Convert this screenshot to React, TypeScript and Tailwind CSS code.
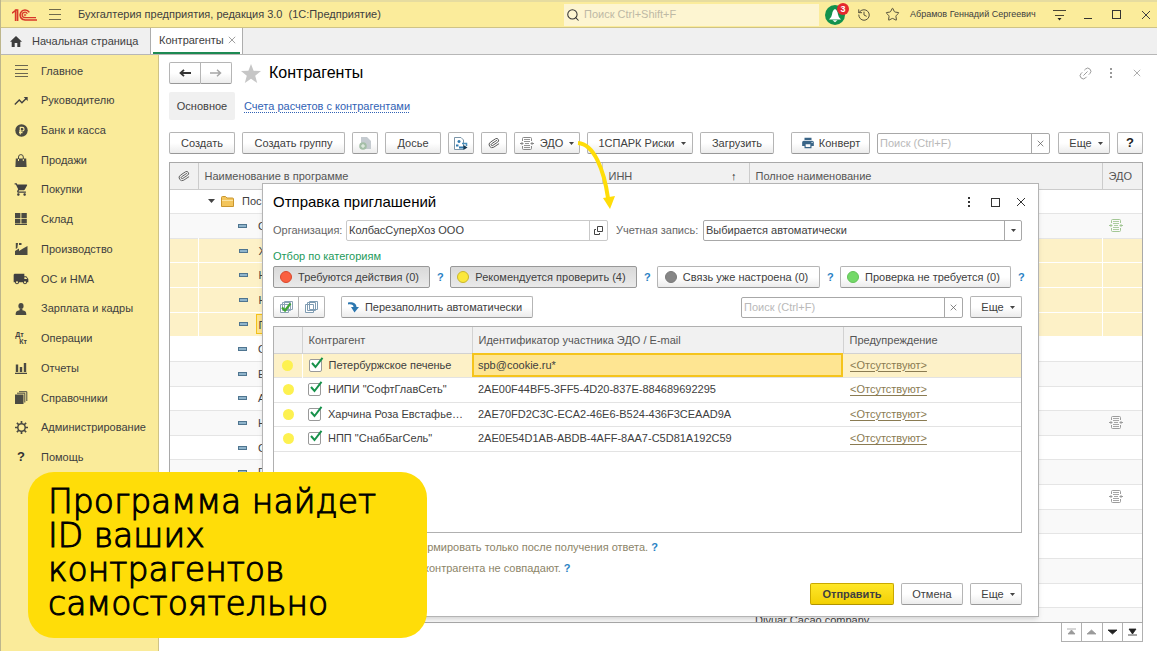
import React from "react";
import clsx from "clsx";
import { MdTrendingUp, MdShoppingCart, MdLocalShipping, MdPrint } from "react-icons/md";
import { History, Link2, Paperclip, Search, Star } from "lucide-react";

const ink = "#4a4a42";

type IconProps = { className?: string };

function Logo() {
  return (
    <svg width="25" height="12" viewBox="0 0 25 12" fill="none" stroke="#d8382a" strokeWidth="1.6">
      <path d="M0 4.2L3.6 1.4V12M2.8 1H5.6V12" />
      <path d="M17.3 3.4A5 5 0 1 0 13 11H25" />
      <path d="M15.3 4.8A2.7 2.7 0 1 0 13 8.6H24" strokeWidth="1.3" />
      <circle cx="13" cy="6" r=".9" strokeWidth=".8" />
    </svg>
  );
}

function EdoIcon({ className }: IconProps) {
  return (
    <svg className={className} width="14" height="13" viewBox="0 0 14 13" fill="none" stroke="currentColor">
      <path d="M2.5 4V1.5Q2.5 .5 3.5 .5H10.5Q11.5 .5 11.5 1.5V4M2.5 9V11.5Q2.5 12.5 3.5 12.5H10.5Q11.5 12.5 11.5 11.5V9" />
      <path d="M4 2.5H10M4 4.5H10M5 6.5H9M4 8.5H10M4 10.5H10" strokeWidth=".9" />
      <path d="M0 6.5H3M11 6.5H14" />
      <path d="M1.5 4.8L3.8 6.5L1.5 8.2zM12.5 4.8L10.2 6.5L12.5 8.2z" fill="currentColor" stroke="none" />
    </svg>
  );
}

function Dots({ className }: IconProps) {
  return (
    <svg className={className} width="4" height="12" viewBox="0 0 4 12" fill="currentColor">
      <rect x="1" y="1" width="2" height="2" />
      <rect x="1" y="5" width="2" height="2" />
      <rect x="1" y="9" width="2" height="2" />
    </svg>
  );
}

function Cross({ className }: IconProps) {
  return (
    <svg className={className} viewBox="0 0 10 10" fill="none" stroke="currentColor">
      <path d="M1 1L9 9M9 1L1 9" />
    </svg>
  );
}

function Caret() {
  return (
    <svg width="5" height="3" viewBox="0 0 5 3" fill="#444">
      <path d="M0 0H5L2.5 3z" />
    </svg>
  );
}

function Square() {
  return <span className="block size-[9px] border border-[#333]" />;
}

function MenuGlyph({ id }: { id: string }) {
  switch (id) {
    case "main":
      return (
        <svg width="13" height="12" viewBox="0 0 13 12" stroke="#6b6650">
          <path d="M0 .5H13M0 4.5H13M0 8.5H13M0 11.5H13" />
        </svg>
      );
    case "chief":
      return <MdTrendingUp size={16} />;
    case "bank":
      return (
        <svg width="13" height="13" viewBox="0 0 13 13">
          <circle cx="6.5" cy="6.5" r="6.2" fill={ink} />
          <path d="M5.3 10.5V3.3H7.2A1.8 1.8 0 0 1 7.2 7H4M4 8.7H7.5" fill="none" stroke="#faeb9a" strokeWidth="1.2" />
        </svg>
      );
    case "sales":
      return (
        <svg width="12" height="13" viewBox="0 0 12 13" fill={ink}>
          <path d="M.8 4.5H11.2L11.6 13H.4z" />
          <path d="M3.5 7V3A2.4 2.4 0 0 1 8.3 3V7" fill="none" stroke={ink} />
          <path d="M3.5 5V7M8.3 5V7" stroke="#faeb9a" />
        </svg>
      );
    case "purchases":
      return <MdShoppingCart size={15} />;
    case "stock":
      return (
        <svg width="12" height="12" viewBox="0 0 12 12" fill={ink}>
          <path d="M0 0H5.4V5H0zM6.4 0H11.8V5H6.4zM0 5.8H5.4V10.5H0zM6.4 5.8H11.8V10.5H6.4zM0 11H12V12H0z" />
        </svg>
      );
    case "production":
      return (
        <svg width="13" height="12" viewBox="0 0 13 12" fill={ink}>
          <path d="M0 8L4 5.5V8L8 5.5L12.5 3V12H0zM.8 0H3L2.4 5L.8 6zM4 0H6.5V2H4z" />
        </svg>
      );
    case "assets":
      return <MdLocalShipping size={16} />;
    case "salary":
      return (
        <svg width="12" height="12" viewBox="0 0 12 12" fill={ink}>
          <ellipse cx="6" cy="3" rx="2.6" ry="3" />
          <path d="M.7 12C.6 8.6 1.5 8 4.6 7.3V6H7.4V7.3C10.5 8 11.4 8.6 11.3 12z" />
        </svg>
      );
    case "operations":
      return (
        <span className="flex flex-col text-[7px] leading-[7px] font-bold">
          <span>Дт</span>
          <span className="pl-1">Кт</span>
        </span>
      );
    case "reports":
      return (
        <svg width="12" height="11" viewBox="0 0 12 11" fill={ink}>
          <path d="M.8 1.5H3.2V9H.8zM4.8 4H7.2V9H4.8zM8.8 0H11.2V9H8.8zM0 9.8H12V11H0z" />
        </svg>
      );
    case "catalogs":
      return (
        <svg width="13" height="13" viewBox="0 0 13 13" fill={ink}>
          <rect y="3.5" width="8.5" height="9.5" />
          <path d="M2 2.2H9.8V11.5M4 .7H11.8V10" fill="none" stroke={ink} />
        </svg>
      );
    case "admin":
      return (
        <svg width="13" height="13" viewBox="0 0 13 13" fill="none" stroke={ink}>
          <circle cx="6.5" cy="6.5" r="3.7" strokeWidth="1.5" />
          <path d="M6.5 0V3M6.5 10V13M0 6.5H3M10 6.5H13M1.9 1.9L4 4M9 9L11.1 11.1M1.9 11.1L4 9M9 4L11.1 1.9" strokeWidth="1.7" />
        </svg>
      );
    default:
      return <span className="text-[13px] font-bold text-[#333]">?</span>;
  }
}

const menu = [
  { id: "main", label: "Главное" },
  { id: "chief", label: "Руководителю" },
  { id: "bank", label: "Банк и касса" },
  { id: "sales", label: "Продажи" },
  { id: "purchases", label: "Покупки" },
  { id: "stock", label: "Склад" },
  { id: "production", label: "Производство" },
  { id: "assets", label: "ОС и НМА" },
  { id: "salary", label: "Зарплата и кадры" },
  { id: "operations", label: "Операции" },
  { id: "reports", label: "Отчеты" },
  { id: "catalogs", label: "Справочники" },
  { id: "admin", label: "Администрирование" },
  { id: "help", label: "Помощь" },
];

type Partner = { name: string; full?: string; selected?: boolean; current?: boolean; edo?: "green" | "gray" };

const partners: Partner[] = [
  { name: "С", edo: "green" },
  { name: "Х", selected: true },
  { name: "Н", selected: true },
  { name: "Н", selected: true },
  { name: "П", selected: true, current: true },
  { name: "О" },
  { name: "Е" },
  { name: "А" },
  { name: "Н", edo: "gray" },
  { name: "С" },
  { name: "Е" },
  { name: "", edo: "gray" },
  { name: "" },
  { name: "" },
  { name: "" },
  { name: "" },
  { name: "", full: "Divuar Cacao company" },
];

const invitations = [
  { name: "Петербуржское печенье", id: "spb@cookie.ru*" },
  { name: 'НИПИ "СофтГлавСеть"', id: "2AE00F44BF5-3FF5-4D20-837E-884689692295" },
  { name: "Харчина Роза Евстафье…", id: "2AE70FD2C3C-ECA2-46E6-B524-436F3CEAAD9A" },
  { name: 'НПП "СнабБагСель"', id: "2AE0E54D1AB-ABDB-4AFF-8AA7-C5D81A192C59" },
];

const categories = [
  { label: "Требуются действия (0)", dot: "bg-[#fa6040] border-[#d9482c]", width: "w-[157px]", pressed: true },
  { label: "Рекомендуется проверить (4)", dot: "bg-[#fbe83c] border-[#c9b62c]", width: "w-[187px]", pressed: true },
  { label: "Связь уже настроена (0)", dot: "bg-[#868686] border-[#7a7a7a]", width: "w-[163px]", pressed: false },
  { label: "Проверка не требуется (0)", dot: "bg-[#73d968] border-[#62c258]", width: "w-[171px]", pressed: false },
];

const tones = {
  plain: "border-[#b5b5b5] border-b-[#989898] bg-linear-to-b from-white from-50% to-[#ececec]",
  pressed: "border-[#989898] bg-linear-to-b from-[#d9d9d9] to-[#eaeaea]",
  primary: "border-[#c9a800] border-b-[#b09300] bg-linear-to-b from-[#ffe726] to-[#f2d000] font-bold",
};

type BtnProps = React.ButtonHTMLAttributes<HTMLButtonElement> & { tone?: keyof typeof tones };

function Btn({ className, children, tone = "plain", ...rest }: BtnProps) {
  return (
    <button
      type="button"
      className={clsx("flex h-[22px] shrink-0 items-center justify-center rounded-xs border whitespace-nowrap", tones[tone], className)}
      {...rest}
    >
      {children}
    </button>
  );
}

function SearchBox({ className, label }: { className?: string; label: string }) {
  return (
    <div className={clsx("flex h-[21px] rounded-xs border border-[#a8a8a8] bg-white", className)}>
      <input aria-label={label} placeholder="Поиск (Ctrl+F)" className="min-w-0 flex-1 px-0.5 outline-none placeholder:text-[#b9b9b9]" />
      <button type="button" aria-label="Очистить" className="flex w-[18px] items-center justify-center border-l border-[#a8a8a8] text-[#555]">
        <Cross className="size-[7px]" />
      </button>
    </div>
  );
}

function TopBar() {
  return (
    <header className="flex h-7 shrink-0 items-center border-t-2 border-b border-t-[#e6dca0] border-b-[#cfc386] bg-[#fbec9b] pr-1.5">
      <div className="flex w-[77px] items-center gap-3 pl-[11px]">
        <Logo />
        <button type="button" aria-label="Меню">
          <svg width="12" height="11" viewBox="0 0 12 11" stroke="#6f6a4c">
            <path d="M0 .5H12M0 5.5H12M0 10.5H12" />
          </svg>
        </button>
      </div>
      <h1>Бухгалтерия предприятия, редакция 3.0&nbsp; (1С:Предприятие)</h1>
      <label className="ml-auto flex h-[22px] w-[255px] items-center gap-1 bg-[#fdf5d1] pl-0.5">
        <Search size={14} strokeWidth={1.8} color="#333" />
        <input aria-label="Поиск" placeholder="Поиск Ctrl+Shift+F" className="min-w-0 flex-1 outline-none placeholder:text-[#bdb9a5]" />
      </label>
      <div className="ml-1.5 flex items-center">
        <button type="button" aria-label="Уведомления" className="relative size-5 rounded-full bg-[#12924d]">
          <svg width="20" height="20" viewBox="0 0 20 20" fill="#fff">
            <path d="M10 4Q12.5 5 13 9.5Q13.4 12.5 16 14.5H4Q6.6 12.5 7 9.5Q7.5 5 10 4zM7.5 15.3H12.5L10 17.3z" />
          </svg>
          <span className="absolute -top-0.5 -right-1 flex size-3 items-center justify-center rounded-full bg-[#e5282e] text-[9px] leading-3 font-bold text-white">3</span>
        </button>
        <button type="button" aria-label="История" className="ml-3"><History size={14} strokeWidth={1.7} color="#55513c" /></button>
        <button type="button" aria-label="Избранное" className="ml-3.5"><Star size={15} strokeWidth={1.6} color="#55513c" /></button>
        <span className="ml-2.5 w-[131px] text-[9px]">Абрамов Геннадий Сергеевич</span>
        <button type="button" aria-label="Настройки" className="ml-3">
          <svg width="13" height="12" viewBox="0 0 13 12" stroke="#4a4634">
            <path d="M0 1.5H13M2 6.5H11" />
            <path d="M4.5 9H8.5L6.5 11.5z" fill="#222" stroke="none" />
          </svg>
        </button>
        <button type="button" aria-label="Свернуть" className="ml-[18px] h-2 w-2 border-b border-[#333]" />
        <button type="button" aria-label="Развернуть" className="ml-5"><Square /></button>
        <button type="button" aria-label="Закрыть" className="ml-5"><Cross className="size-[10px]" /></button>
      </div>
    </header>
  );
}

function TabStrip() {
  return (
    <nav className="flex h-[27px] shrink-0 border-b border-[#b7b7b7] bg-[#f0f0f0]">
      <a href="#home" className="flex w-[149px] items-center gap-2.5 pl-[9px]">
        <svg width="12" height="11" viewBox="0 0 12 11" fill="#3c3c3c">
          <path d="M6 0L12 5.8H10.3V11H7.3V7H4.7V11H1.7V5.8H0z" />
        </svg>
        Начальная страница
      </a>
      <div className="flex w-[93px] items-stretch border-x border-[#adadad] bg-white px-0.5">
        <div className="flex w-full items-center justify-between border-b-2 border-[#1d8a53] pr-1 pl-1.5">
          <a href="#partners">Контрагенты</a>
          <button type="button" aria-label="Закрыть вкладку" className="text-[#888]"><Cross className="size-2" /></button>
        </div>
      </div>
    </nav>
  );
}

function Sidebar() {
  return (
    <aside className="w-[158px] shrink-0 border-r border-[#cfc386] bg-[#faeb9a]">
      <ul className="flex h-[417px] flex-col pt-px">
        {menu.map((m) => (
          <li key={m.id} className="flex flex-1 items-center">
            <a href={`#${m.id}`} className="flex items-center">
              <span className="flex w-10 justify-center"><MenuGlyph id={m.id} /></span>
              {m.label}
            </a>
          </li>
        ))}
      </ul>
    </aside>
  );
}

function PartnersTable() {
  return (
    <div className="min-h-0 flex-1 overflow-hidden border border-[#a9a9a9]">
      <table className="h-[470px] w-full table-fixed border-collapse text-left">
        <colgroup>
          <col className="w-7" />
          <col className="w-[404px]" />
          <col className="w-[147px]" />
          <col />
          <col className="w-10" />
        </colgroup>
        <thead>
          <tr className="h-[26px] border-b border-[#cccccc] bg-[#f1f1f1] text-[#555]">
            <th className="font-normal" aria-label="Файлы"><Paperclip size={12} strokeWidth={1.7} className="mx-auto rotate-12" /></th>
            <th className="border-l border-[#cccccc] pl-1.5 font-normal">Наименование в программе</th>
            <th className="border-l border-[#cccccc] pl-1.5 font-normal">
              <span className="flex justify-between pr-3">ИНН <span className="text-[#222]">↑</span></span>
            </th>
            <th className="border-l border-[#cccccc] pl-1.5 font-normal">Полное наименование</th>
            <th className="border-l border-[#cccccc] pl-1.5 font-normal">ЭДО</th>
          </tr>
        </thead>
        <tbody>
          <tr className="h-6 border-b border-[#e5e5e5]">
            <td />
            <td>
              <span className="flex items-center pl-2.5">
                <svg width="7" height="4" viewBox="0 0 7 4" fill="#444"><path d="M0 0H7L3.5 4z" /></svg>
                <svg width="13" height="11" viewBox="0 0 13 11" className="mr-2 ml-1.5">
                  <path d="M.5 10.5V1.5Q.5 .5 1.5 .5H4.5L6 2H11.5Q12.5 2 12.5 3V10.5z" fill="#f3c55c" stroke="#c9962f" />
                  <path d="M1 4.5H12" stroke="#fbe3a0" />
                </svg>
                Пос
              </span>
            </td>
            <td /><td /><td />
          </tr>
          {partners.map((p, i) => (
            <tr key={i} className={clsx("h-6 border-b", p.selected ? "border-white bg-[#fdf1c7]" : "border-[#e5e5e5] even:bg-[#f9f9f9]")}>
              <td />
              <td className={clsx(p.selected && "border-l border-white")}>
                <span className="flex items-center gap-2 pl-10">
                  <span className="h-1 w-[9px] border border-[#4f7590] bg-[#8fb4cb]" />
                  <span className={clsx("h-5 leading-5", p.current ? "w-60 border border-[#f3c11b] bg-[#fee48f] pl-0.5" : "pl-[3px]")}>{p.name}</span>
                </span>
              </td>
              <td className={clsx(p.selected && "border-l border-white")} />
              <td className={clsx("pl-1.5", p.selected && "border-l border-white")}>{p.full}</td>
              <td className={clsx(p.selected && "border-l border-white")}>
                {p.edo && <EdoIcon className={clsx("ml-[7px]", p.edo === "green" ? "text-[#a3c795]" : "text-[#9c9c9c]")} />}
              </td>
            </tr>
          ))}
        </tbody>
      </table>
    </div>
  );
}

function Scroller() {
  const items = [
    { label: "В начало", d: "M0 1H9M1 6L4.5 2L8 6z", on: false },
    { label: "Вверх", d: "M0 6L4.5 2L9 6z", on: false },
    { label: "Вниз", d: "M0 2L4.5 6L9 2z", on: true },
    { label: "В конец", d: "M0 7H9M1 1H8L4.5 6z", on: true },
  ];
  return (
    <div className="flex h-[19px] w-[82px] shrink-0 self-end border border-t-0 border-[#b0b0b0]">
      {items.map((it) => (
        <button
          key={it.label}
          type="button"
          aria-label={it.label}
          className={clsx("flex flex-1 items-center justify-center border-l border-[#b0b0b0] first:border-l-0", it.on ? "text-[#222]" : "text-[#9a9a9a]")}
        >
          <svg width="9" height="8" viewBox="0 0 9 8" fill="currentColor" stroke="currentColor" strokeWidth=".8"><path d={it.d} /></svg>
        </button>
      ))}
    </div>
  );
}

function PartnersPage() {
  return (
    <main className="flex min-w-0 flex-1 flex-col bg-white pt-[7px] pr-[14px] pb-[9px] pl-2.5">
      <div className="flex h-[22px] items-center">
        <div className="flex">
          <Btn className="w-8 rounded-r-none" aria-label="Назад">
            <svg width="12" height="8" viewBox="0 0 12 8" stroke="#333" strokeWidth="1.8" fill="none"><path d="M12 4H2M5 .8L1.5 4L5 7.2" /></svg>
          </Btn>
          <Btn className="w-[31px] rounded-l-none border-l-0" aria-label="Вперед">
            <svg width="12" height="8" viewBox="0 0 12 8" stroke="#a6a6a6" strokeWidth="1.5" fill="none"><path d="M0 4H10M7 .8L10.5 4L7 7.2" /></svg>
          </Btn>
        </div>
        <button type="button" aria-label="В избранное" className="ml-[9px]">
          <svg width="20" height="19" viewBox="0 0 20 19" fill="#c6c6c6"><path d="M10 0L12.6 6.8L20 7.1L14.2 11.7L16.2 19L10 14.8L3.8 19L5.8 11.7L0 7.1L7.4 6.8z" /></svg>
        </button>
        <h2 className="ml-2 text-[16px] text-black">Контрагенты</h2>
        <div className="ml-auto flex items-center pr-0.5 text-[#999]">
          <button type="button" aria-label="Ссылка"><Link2 size={15} strokeWidth={1.5} className="-rotate-45" /></button>
          <button type="button" aria-label="Действия" className="ml-4"><Dots /></button>
          <button type="button" aria-label="Закрыть" className="ml-5"><Cross className="size-2" /></button>
        </div>
      </div>
      <nav className="mt-2 flex h-7 items-center gap-[9px]">
        <span className="flex h-7 w-[66px] items-center justify-center rounded-xs bg-[#f0f0f0]">Основное</span>
        <a href="#accounts" className="text-[#3162b5] underline decoration-dotted underline-offset-2">Счета расчетов с контрагентами</a>
      </nav>
      <div className="mt-3 mb-2 flex items-center gap-[7px]">
        <Btn className="w-[66px]">Создать</Btn>
        <Btn className="w-[103px]">Создать группу</Btn>
        <Btn className="w-[26px]" aria-label="Создать копированием">
          <svg width="12" height="13" viewBox="0 0 12 13"><path d="M2 0H8L12 4V12H2z" fill="#c5cbd0" /><circle cx="4" cy="9" r="3.8" fill="#a5bfa8" /><path d="M4 7V11M2 9H6" stroke="#eef5ee" /></svg>
        </Btn>
        <Btn className="w-14">Досье</Btn>
        <Btn className="w-[26px]" aria-label="Связи">
          <svg width="14" height="13" viewBox="0 0 14 13" fill="none">
            <path d="M.5 .5H7L9.5 3V12.5H.5z" fill="#fff" stroke="#7b95a8" />
            <path d="M5 3V6M3.5 4.5H6.5" stroke="#2e78ad" strokeWidth="1.5" />
            <path d="M2 8.5H4.5M5 10.5H10" stroke="#2e78ad" strokeWidth="2" />
            <path d="M8 6.5H12.5V9" stroke="#4a90bd" strokeWidth="1.5" />
            <path d="M9.5 8L13.5 10.5L9.5 13z" fill="#14364f" />
          </svg>
        </Btn>
        <Btn className="w-[26px]" aria-label="Файлы"><Paperclip size={12} strokeWidth={1.6} className="rotate-12" /></Btn>
        <Btn className="w-[66px] gap-1.5"><EdoIcon className="text-[#888]" />ЭДО<Caret /></Btn>
        <Btn className="w-[106px] gap-1.5 pl-1">1СПАРК Риски<Caret /></Btn>
        <Btn className="w-[74px]">Загрузить</Btn>
        <Btn className="ml-2.5 w-[79px] gap-1"><MdPrint size={14} color="#3a6587" />Конверт</Btn>
        <SearchBox label="Поиск контрагента" className="min-w-0 flex-1" />
        <Btn className="ml-px w-[52px] gap-1.5 pl-1">Еще<Caret /></Btn>
        <Btn className="w-[26px] text-[13px] font-bold text-[#222]">?</Btn>
      </div>
      <PartnersTable />
      <Scroller />
    </main>
  );
}

function Hint() {
  return <button type="button" aria-label="Справка" className="w-1.5 text-[11px] leading-3 font-bold text-[#2a82c4]">?</button>;
}

function InviteDialog() {
  return (
    <section
      role="dialog"
      aria-labelledby="invite-title"
      className="absolute top-[183px] right-[118px] left-[261px] border border-[#b4b4b4] bg-white pt-2 pr-4 pb-[11px] pl-2.5 shadow-md"
    >
      <div className="flex h-5 items-center">
        <h2 id="invite-title" className="text-[15px] text-black">Отправка приглашений</h2>
        <div className="-mr-1 ml-auto flex items-center text-[#333]">
          <button type="button" aria-label="Действия"><Dots /></button>
          <button type="button" aria-label="Развернуть" className="ml-5"><Square /></button>
          <button type="button" aria-label="Закрыть" className="ml-4"><Cross className="size-[10px]" /></button>
        </div>
      </div>

      <div className="mt-2 flex h-[21px] items-center">
        <label htmlFor="org" className="w-[73px] shrink-0 whitespace-nowrap text-[#666]">Организация:</label>
        <div className="flex h-[21px] w-[262px] rounded-xs border border-[#c9c9c9]">
          <input id="org" defaultValue="КолбасСуперХоз ООО" className="min-w-0 flex-1 px-0.5 outline-none" />
          <button type="button" aria-label="Открыть" className="flex w-[18px] items-center justify-center border-l border-[#c9c9c9]">
            <svg width="9" height="9" viewBox="0 0 9 9" fill="none" stroke="#444"><path d="M3.5 .5H8.5V5.5H3.5zM2 3.5H.5V8.5H5.5V7" /></svg>
          </button>
        </div>
        <label htmlFor="account" className="ml-2 w-[87px] shrink-0 whitespace-nowrap text-[#666]">Учетная запись:</label>
        <div className="relative h-[21px] flex-1">
          <select id="account" className="h-full w-full appearance-none rounded-xs border border-[#a8a8a8] bg-white px-0.5 outline-none">
            <option>Выбирается автоматически</option>
          </select>
          <span className="pointer-events-none absolute inset-y-0 right-0 flex w-[18px] items-center justify-center border-l border-[#a8a8a8]"><Caret /></span>
        </div>
      </div>

      <p className="mt-1.5 h-[19px] leading-[19px] text-[#1d9a5b]">Отбор по категориям</p>

      <div className="flex items-center gap-[7px]">
        {categories.map((c) => (
          <React.Fragment key={c.label}>
            <Btn aria-pressed={c.pressed} tone={c.pressed ? "pressed" : "plain"} className={clsx("gap-1.5 pr-1", c.width)}>
              <span className={clsx("size-3 rounded-full border", c.dot)} />
              {c.label}
            </Btn>
            <Hint />
          </React.Fragment>
        ))}
      </div>

      <div className="mt-2 flex items-center">
        <Btn className="w-[26px] rounded-r-none" aria-label="Выбрать все">
          <svg width="13" height="12" viewBox="0 0 13 12" fill="#fff" stroke="#8ba3b6">
            <path d="M4.5 .5H12.5V8.5H4.5zM2.5 1.5H10.5V9.5H2.5zM.5 3.5H8.5V11.5H.5z" />
            <path d="M2 6.5L5 9.5L10.5 2.5" fill="none" stroke="#3fa535" strokeWidth="2.2" />
          </svg>
        </Btn>
        <Btn className="w-[26px] rounded-l-none border-l-0" aria-label="Снять отметки">
          <svg width="13" height="12" viewBox="0 0 13 12" fill="#fff" stroke="#7f9cb2"><path d="M4.5 .5H12.5V8.5H4.5zM2.5 1.5H10.5V9.5H2.5zM.5 3.5H8.5V11.5H.5z" /></svg>
        </Btn>
        <Btn className="ml-4 w-[192px] gap-1.5 pr-1">
          <svg width="11" height="11" viewBox="0 0 11 11" fill="#2c77b0"><path d="M0 .5C5-.5 8.5 1.5 8.5 5H11L6.5 10.5L3 5H5.5C5.5 3 3.5 2 0 2.5z" /></svg>
          Перезаполнить автоматически
        </Btn>
        <SearchBox label="Поиск приглашения" className="ml-auto w-[222px]" />
        <Btn className="ml-[7px] w-[52px] gap-1.5 pl-1">Еще<Caret /></Btn>
      </div>

      <div className="mt-2 h-[207px] border border-[#b0b0b0]">
        <table className="w-full table-fixed border-collapse text-left">
          <colgroup>
            <col className="w-7" />
            <col className="w-[170px]" />
            <col className="w-[371px]" />
            <col />
          </colgroup>
          <thead>
            <tr className="h-[26px] border-b border-[#d2d2d2] bg-[#f1f1f1] text-[#555]">
              <th aria-label="Статус" />
              <th className="border-l border-[#d2d2d2] pl-1.5 font-normal">Контрагент</th>
              <th className="border-l border-[#d2d2d2] pl-1.5 font-normal">Идентификатор участника ЭДО / E-mail</th>
              <th className="border-l border-[#d2d2d2] pl-1.5 font-normal">Предупреждение</th>
            </tr>
          </thead>
          <tbody>
            {invitations.map((row, i) => (
              <tr key={row.id} className={clsx("h-[25px] border-b border-[#e3e3e3] odd:h-6", i === 0 && "bg-[#fdf1c7]")}>
                <td><span className="mx-auto block size-[11px] rounded-full bg-[#fdf150]" /></td>
                <td className={clsx("pl-1.5", i === 0 && "border-l border-white")}>
                  <label className="flex items-center gap-[7px]">
                    <span className="relative size-[13px] shrink-0">
                      <input type="checkbox" defaultChecked className="peer block size-[13px] appearance-none rounded-xs border border-[#999] bg-white" />
                      <svg width="13" height="12" viewBox="0 0 13 12" fill="none" stroke="#17924b" strokeWidth="2" className="pointer-events-none absolute -top-0.5 left-0.5 hidden peer-checked:block">
                        <path d="M1 6L4.5 10L11.5 .8" />
                      </svg>
                    </span>
                    <span className="whitespace-nowrap">{row.name}</span>
                  </label>
                </td>
                <td className={clsx("pl-1.5", i === 0 && "bg-[#fee592] outline-2 -outline-offset-2 outline-[#f5c41c]")}>{row.id}</td>
                <td className="pl-[7px]"><a href="#warning" className="text-[#8a7b52] underline underline-offset-2">&lt;Отсутствуют&gt;</a></td>
              </tr>
            ))}
          </tbody>
        </table>
      </div>

      <div className="mt-1 leading-[21px] text-[#8c8468]">
        <p className="pl-[139px]">формировать только после получения ответа. <Hint /></p>
        <p className="pl-[151px]">контрагента не совпадают. <Hint /></p>
      </div>

      <div className="mt-1 flex justify-end gap-[7px]">
        <Btn tone="primary" className="w-[84px]">Отправить</Btn>
        <Btn className="w-[62px]">Отмена</Btn>
        <Btn className="w-[52px] gap-1.5 pl-1">Еще<Caret /></Btn>
      </div>
    </section>
  );
}

export default function App() {
  return (
    <div className="relative flex h-screen flex-col overflow-hidden border-l border-[#bdb68c] bg-white font-['Liberation_Sans',Arial,sans-serif] text-[11px] text-[#404040]">
      <TopBar />
      <TabStrip />
      <div className="flex min-h-0 flex-1">
        <Sidebar />
        <PartnersPage />
      </div>
      <InviteDialog />

      {/* Pointer from the ЭДО button to the dialog */}
      <svg className="pointer-events-none absolute top-[138px] left-[573px]" width="44" height="74" viewBox="0 0 44 74">
        <path d="M4 5C20 6 30 32 34 60" fill="none" stroke="#ffdd08" strokeWidth="4" />
        <path d="M29 60L41 58L36 71z" fill="#ffdd08" />
      </svg>

      <p className="absolute bottom-[13px] left-[27px] w-[399px] rounded-[26px] bg-[#ffdd08] px-5 pt-[13px] pb-[17px] font-['DejaVu_Sans',sans-serif] text-[33px] leading-[34px] font-extralight text-black [-webkit-text-stroke:1px_black]">
        Программа найдет
        <br />ID ваших
        <br />контрагентов
        <br />самостоятельно
      </p>
    </div>
  );
}
